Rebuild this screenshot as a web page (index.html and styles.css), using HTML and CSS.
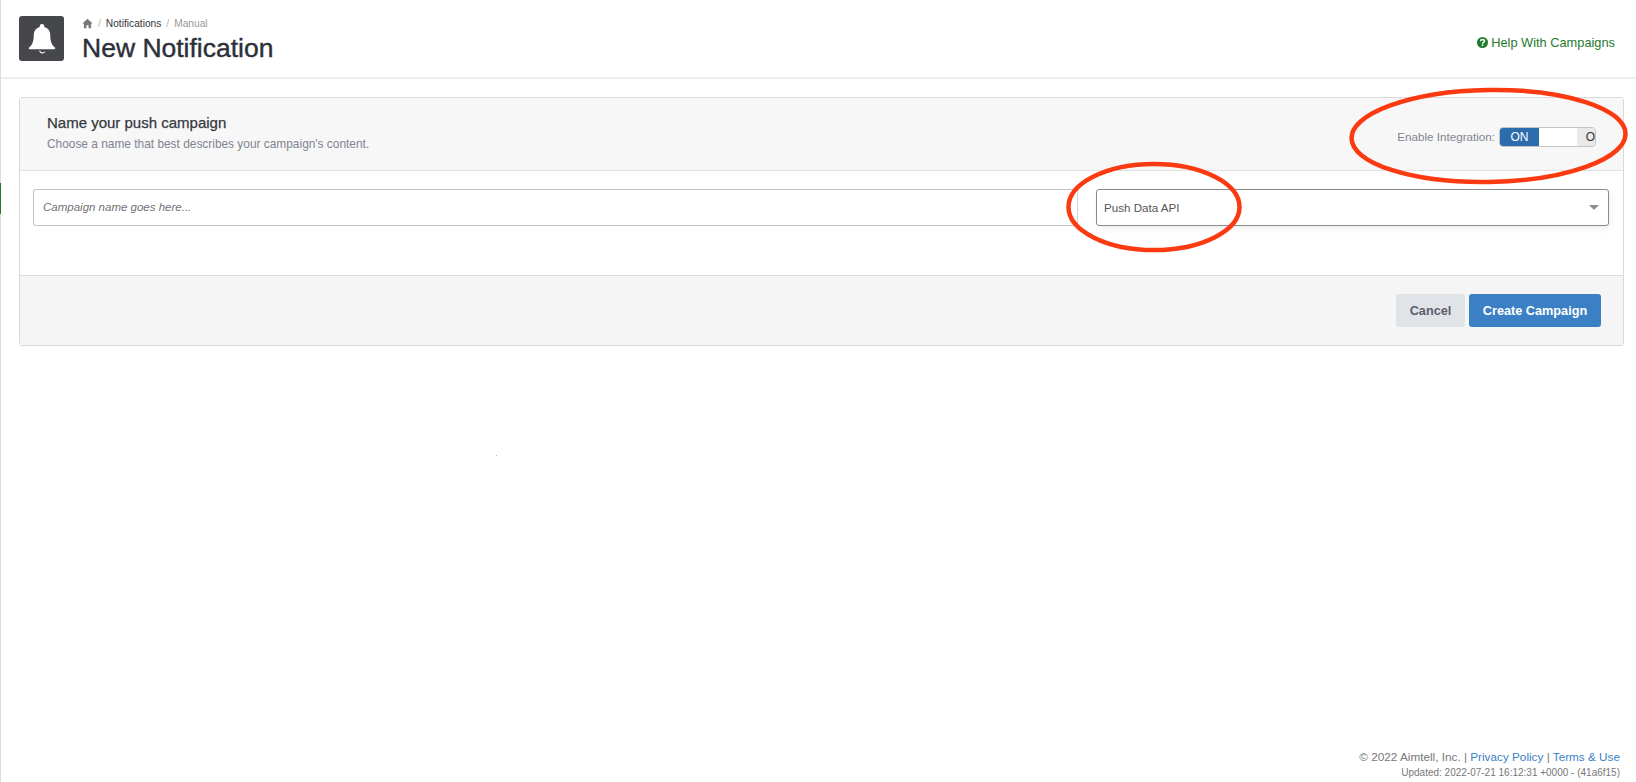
FILE: index.html
```html
<!DOCTYPE html>
<html lang="en">
<head>
<meta charset="utf-8">
<title>New Notification</title>
<link rel="stylesheet" href="styles.css">
</head>
<body>
<div class="page">
  <span class="rail-mark"></span>
  <header class="topbar">
    <div class="page-icon">
      <svg viewBox="0 0 24 24" width="32" height="32" class="bell"><path fill="#fff" d="M12 .8c1 0 1.700.7 1.700 1.600v.6c3 .8 4.500 3.300 4.500 6.300 0 4 .9 6.900 3.500 9.100.5.500.2 1.300-.5 1.300H2.800c-.7 0-1-.8-.5-1.300 2.600-2.200 3.500-5.100 3.500-9.100 0-3 1.500-5.500 4.500-6.300v-.6c0-.9.700-1.600 1.700-1.600z"/><path fill="none" stroke="#fff" stroke-width=".8" d="M10.200 20.700a2.200 2.200 0 0 0 3.900.9"/></svg>
    </div>
    <div class="titles">
      <nav class="crumbs">
        <svg viewBox="0 0 16 16" width="11" height="11"><path fill="#777a80" d="M8 1 .5 8h2.200v7h3.800v-4.500h3V15h3.800V8h2.200z"/></svg>
        <span class="sep">/</span><a class="crumb-link">Notifications</a><span class="sep">/</span><span class="crumb-current">Manual</span>
      </nav>
      <h1>New Notification</h1>
    </div>
    <a class="help">
      <svg viewBox="0 0 16 16" width="11" height="11"><circle cx="8" cy="8" r="8" fill="#1f7a2e"/><path fill="none" stroke="#fff" stroke-width="2.200" d="M5.200 6.200C5.300 4.600 6.500 3.800 8 3.800c1.600 0 2.800.9 2.800 2.200 0 1.900-2.800 1.900-2.800 3.800"/><rect x="6.800" y="10.800" width="2.400" height="2.300" fill="#fff"/></svg>
      Help With Campaigns
    </a>
  </header>

  <main class="content">
    <section class="card">
      <div class="card-head">
        <div class="head-text">
          <h2>Name your push campaign</h2>
          <p>Choose a name that best describes your campaign's content.</p>
        </div>
        <div class="toggle-row">
          <span class="toggle-label">Enable Integration:</span>
          <div class="toggle">
            <span class="toggle-on">ON</span><span class="toggle-handle"></span><span class="toggle-off">O</span>
          </div>
        </div>
      </div>
      <div class="card-body">
        <div class="name-wrap"><div class="name-input">Campaign name goes here...</div></div>
        <div class="select">
          <span>Push Data API</span>
          <i class="caret"></i>
        </div>
      </div>
      <div class="card-foot">
        <button class="btn btn-cancel">Cancel</button>
        <button class="btn btn-primary">Create Campaign</button>
      </div>
    </section>
  </main>

  <footer class="footer">
    <div class="foot-main">© 2022 Aimtell, Inc. | <a>Privacy Policy</a> | <a>Terms &amp; Use</a></div>
    <div class="foot-sub">Updated: 2022-07-21 16:12:31 +0000 - (41a6f15)</div>
  </footer>

  <span class="speck"></span>
  <svg class="marks" width="1636" height="782" viewBox="0 0 1636 782">
    <ellipse cx="1488.500" cy="136" rx="137" ry="46" transform="rotate(-1 1488 135)"/>
    <ellipse cx="1154" cy="207" rx="85.500" ry="43"/>
  </svg>
</div>
</body>
</html>
```
FILE: styles.css
```css
* { box-sizing: border-box; }
html, body { margin: 0; height: 100%; }
body { font-family: "Liberation Sans", Arial, sans-serif; color: #2b3039; background: #fff; overflow: hidden; }
.page { position: relative; height: 782px; display: flex; flex-direction: column; border-left: 1px solid #dcdcdc; }
.rail-mark { position: absolute; left: -1px; top: 183px; width: 1px; height: 31px; background: #1f7a2e; }

.topbar { height: 79px; display: flex; align-items: flex-start; padding: 16px 21px 0 18px; border-bottom: 2px solid #eeeeee; }
.page-icon { width: 45px; height: 45px; background: #46474b; border-radius: 3px; display: flex; align-items: center; justify-content: center; flex: none; }
.bell { display: block; }
.titles { margin-left: 18px; flex: 1; }
.crumbs { display: flex; align-items: center; height: 15px; font-size: 10.200px; color: #999; }
.sep { margin: 0 5px; color: #b5b5b5; }
.crumb-link { color: #33363c; }
.crumb-current { color: #999; }
h1 { margin: 2px 0 0; font-size: 26.500px; line-height: 30px; font-weight: 400; color: #2b3039; -webkit-text-stroke: .4px #2b3039; }
.help { margin-top: 19px; font-size: 12.800px; line-height: 15px; color: #1f7a2e; display: flex; align-items: center; gap: 3px; }

.content { flex: 1; padding: 18px 12px 0 18px; }
.card { border: 1px solid #d9d9d9; border-radius: 3px; height: 249px; display: flex; flex-direction: column; }
.card-head { height: 73px; background: #f7f7f7; border-bottom: 1px solid #e2e2e2; display: flex; align-items: center; justify-content: space-between; padding: 0 27px; }
.head-text { padding-bottom: 3px; }
h2 { margin: 0; font-size: 15px; line-height: 18px; font-weight: 400; color: #353840; -webkit-text-stroke: .25px #353840; }
.card-head p { margin: 5px 0 0; font-size: 11.900px; line-height: 14px; color: #7e8590; }
.toggle-row { display: flex; align-items: center; gap: 4px; margin-top: 5px; }
.toggle-label { font-size: 11.650px; color: #7e8590; }
.toggle { width: 97px; height: 20px; border: 1px solid #c4c4c4; border-radius: 4px; display: flex; overflow: hidden; font-size: 12px; line-height: 18px; background: #fff; }
.toggle-on { width: 39px; background: #2c6cad; color: #fff; text-align: center; }
.toggle-handle { width: 38px; background: #fff; }
.toggle-off { flex: 1; background: #e9e9e9; color: #333; padding-left: 9px; }

.card-body { height: 104px; display: flex; padding: 18px 14px 0 13px; align-items: flex-start; }
.name-wrap { flex: none; width: 1045px; border-right: 1px solid #d4d4d4; margin-right: 18px; height: 37px; }
.name-input { height: 37px; border: 1px solid #c4c4c4; border-right: 0; border-radius: 3px 0 0 3px; padding: 0 9px; font-size: 11.500px; line-height: 35px; font-style: italic; color: #6f737a; }
.select { flex: 1; height: 37px; border: 1px solid #8a8a8a; border-radius: 3px; display: flex; align-items: center; justify-content: space-between; padding: 0 9px 1px 7px; font-size: 11.600px; color: #555; box-shadow: 2px 3px 6px rgba(0,0,0,.06); }
.caret { width: 0; height: 0; border-left: 5px solid transparent; border-right: 5px solid transparent; border-top: 5px solid #8e8e94; }

.card-foot { flex: 1; background: #f5f5f5; border-top: 1px solid #dcdcdc; display: flex; justify-content: flex-end; align-items: center; gap: 4px; padding: 0 22px 0 0; }
.btn { height: 33px; border: 0; border-radius: 3px; font-family: inherit; font-size: 12.700px; font-weight: 700; padding: 0; }
.btn-cancel { width: 69px; background: #e0e3e8; color: #5a616b; }
.btn-primary { width: 132px; background: #3b80c4; color: #fff; }

.footer { padding: 0 16px 2px 0; text-align: right; }
.foot-main { font-size: 11.750px; line-height: 16px; color: #777; margin-bottom: 1px; }
.foot-main a { color: #3b80c4; }
.foot-sub { font-size: 10px; line-height: 14px; color: #777; }

.speck { position: absolute; left: 495px; top: 455px; width: 1px; height: 1px; background: #b8b8b8; }
.marks { position: absolute; left: -1px; top: 0; pointer-events: none; }
.marks ellipse { fill: none; stroke: #fb3a12; stroke-width: 4.500; }
```
